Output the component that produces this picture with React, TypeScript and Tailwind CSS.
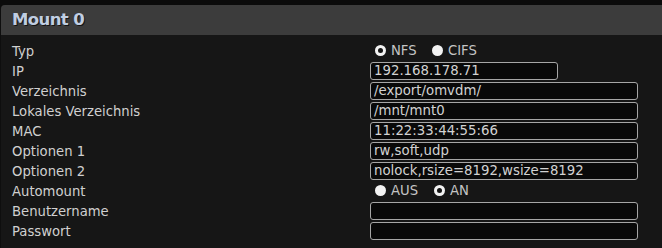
const font = { fontFamily: '"DejaVu Sans", Verdana, sans-serif' };

function Radio({ checked, label, w }: { checked: boolean; label: string; w: string }) {
  return (
    <div className={`flex items-center gap-[5px] ${w}`}>
      <span className="flex h-[11px] w-[11px] items-center justify-center rounded-full bg-[#f2f2f2]">
        {checked && <span className="h-[5px] w-[5px] rounded-full bg-[#151515]" />}
      </span>
      <span className="text-[13.2px] text-[#c4c4c4]">{label}</span>
    </div>
  );
}

function Field({ value, w = 'w-[268px]' }: { value: string; w?: string }) {
  return (
    <div
      className={`flex h-[18px] items-center rounded-[3px] border border-[#a6a6a6] bg-[#090909] px-[3px] text-[13.3px] text-[#d2d2d2] ${w}`}
    >
      {value}
    </div>
  );
}

const rows: { label: string; value?: string; w?: string; radios?: [string, boolean, string][] }[] = [
  { label: 'Typ', radios: [['NFS', true, 'w-[57px]'], ['CIFS', false, '']] },
  { label: 'IP', value: '192.168.178.71', w: 'w-[188px]' },
  { label: 'Verzeichnis', value: '/export/omvdm/' },
  { label: 'Lokales Verzeichnis', value: '/mnt/mnt0' },
  { label: 'MAC', value: '11:22:33:44:55:66' },
  { label: 'Optionen 1', value: 'rw,soft,udp' },
  { label: 'Optionen 2', value: 'nolock,rsize=8192,wsize=8192' },
  { label: 'Automount', radios: [['AUS', false, 'w-[59px]'], ['AN', true, '']] },
  { label: 'Benutzername', value: '' },
  { label: 'Passwort', value: '' },
];

export default function App() {
  return (
    <div className="h-[248px] w-[662px] overflow-hidden bg-[#0b0b0b] pt-[5px]" style={font}>
      <div className="h-[243px] rounded-tl-[4px] border-l border-[#0e0e0e] bg-[#161616]">
        {/* header */}
        <div className="flex h-[30px] items-center rounded-tl-[4px] bg-[#3c3c3c] pl-[11px]">
          <span
            className="text-[16.5px] font-bold tracking-[-0.6px] text-[#c0cee2]"
            style={{ textShadow: '1px 1px 0 #141414' }}
          >
            Mount 0
          </span>
        </div>

        {/* form */}
        <div className="flex flex-col pt-[6px]">
          {rows.map((r) => (
            <div key={r.label} className="flex h-[20px] items-center">
              <div className="w-[369px] pl-[11px] pt-[1px] text-[13.2px] text-[#d0d0d0]">{r.label}</div>
              {r.radios ? (
                <div className="flex items-center pl-[5px]">
                  {r.radios.map(([l, c, w]) => (
                    <Radio key={l} label={l} checked={c} w={w} />
                  ))}
                </div>
              ) : (
                <Field value={r.value ?? ''} w={r.w} />
              )}
            </div>
          ))}
        </div>
      </div>
    </div>
  );
}
